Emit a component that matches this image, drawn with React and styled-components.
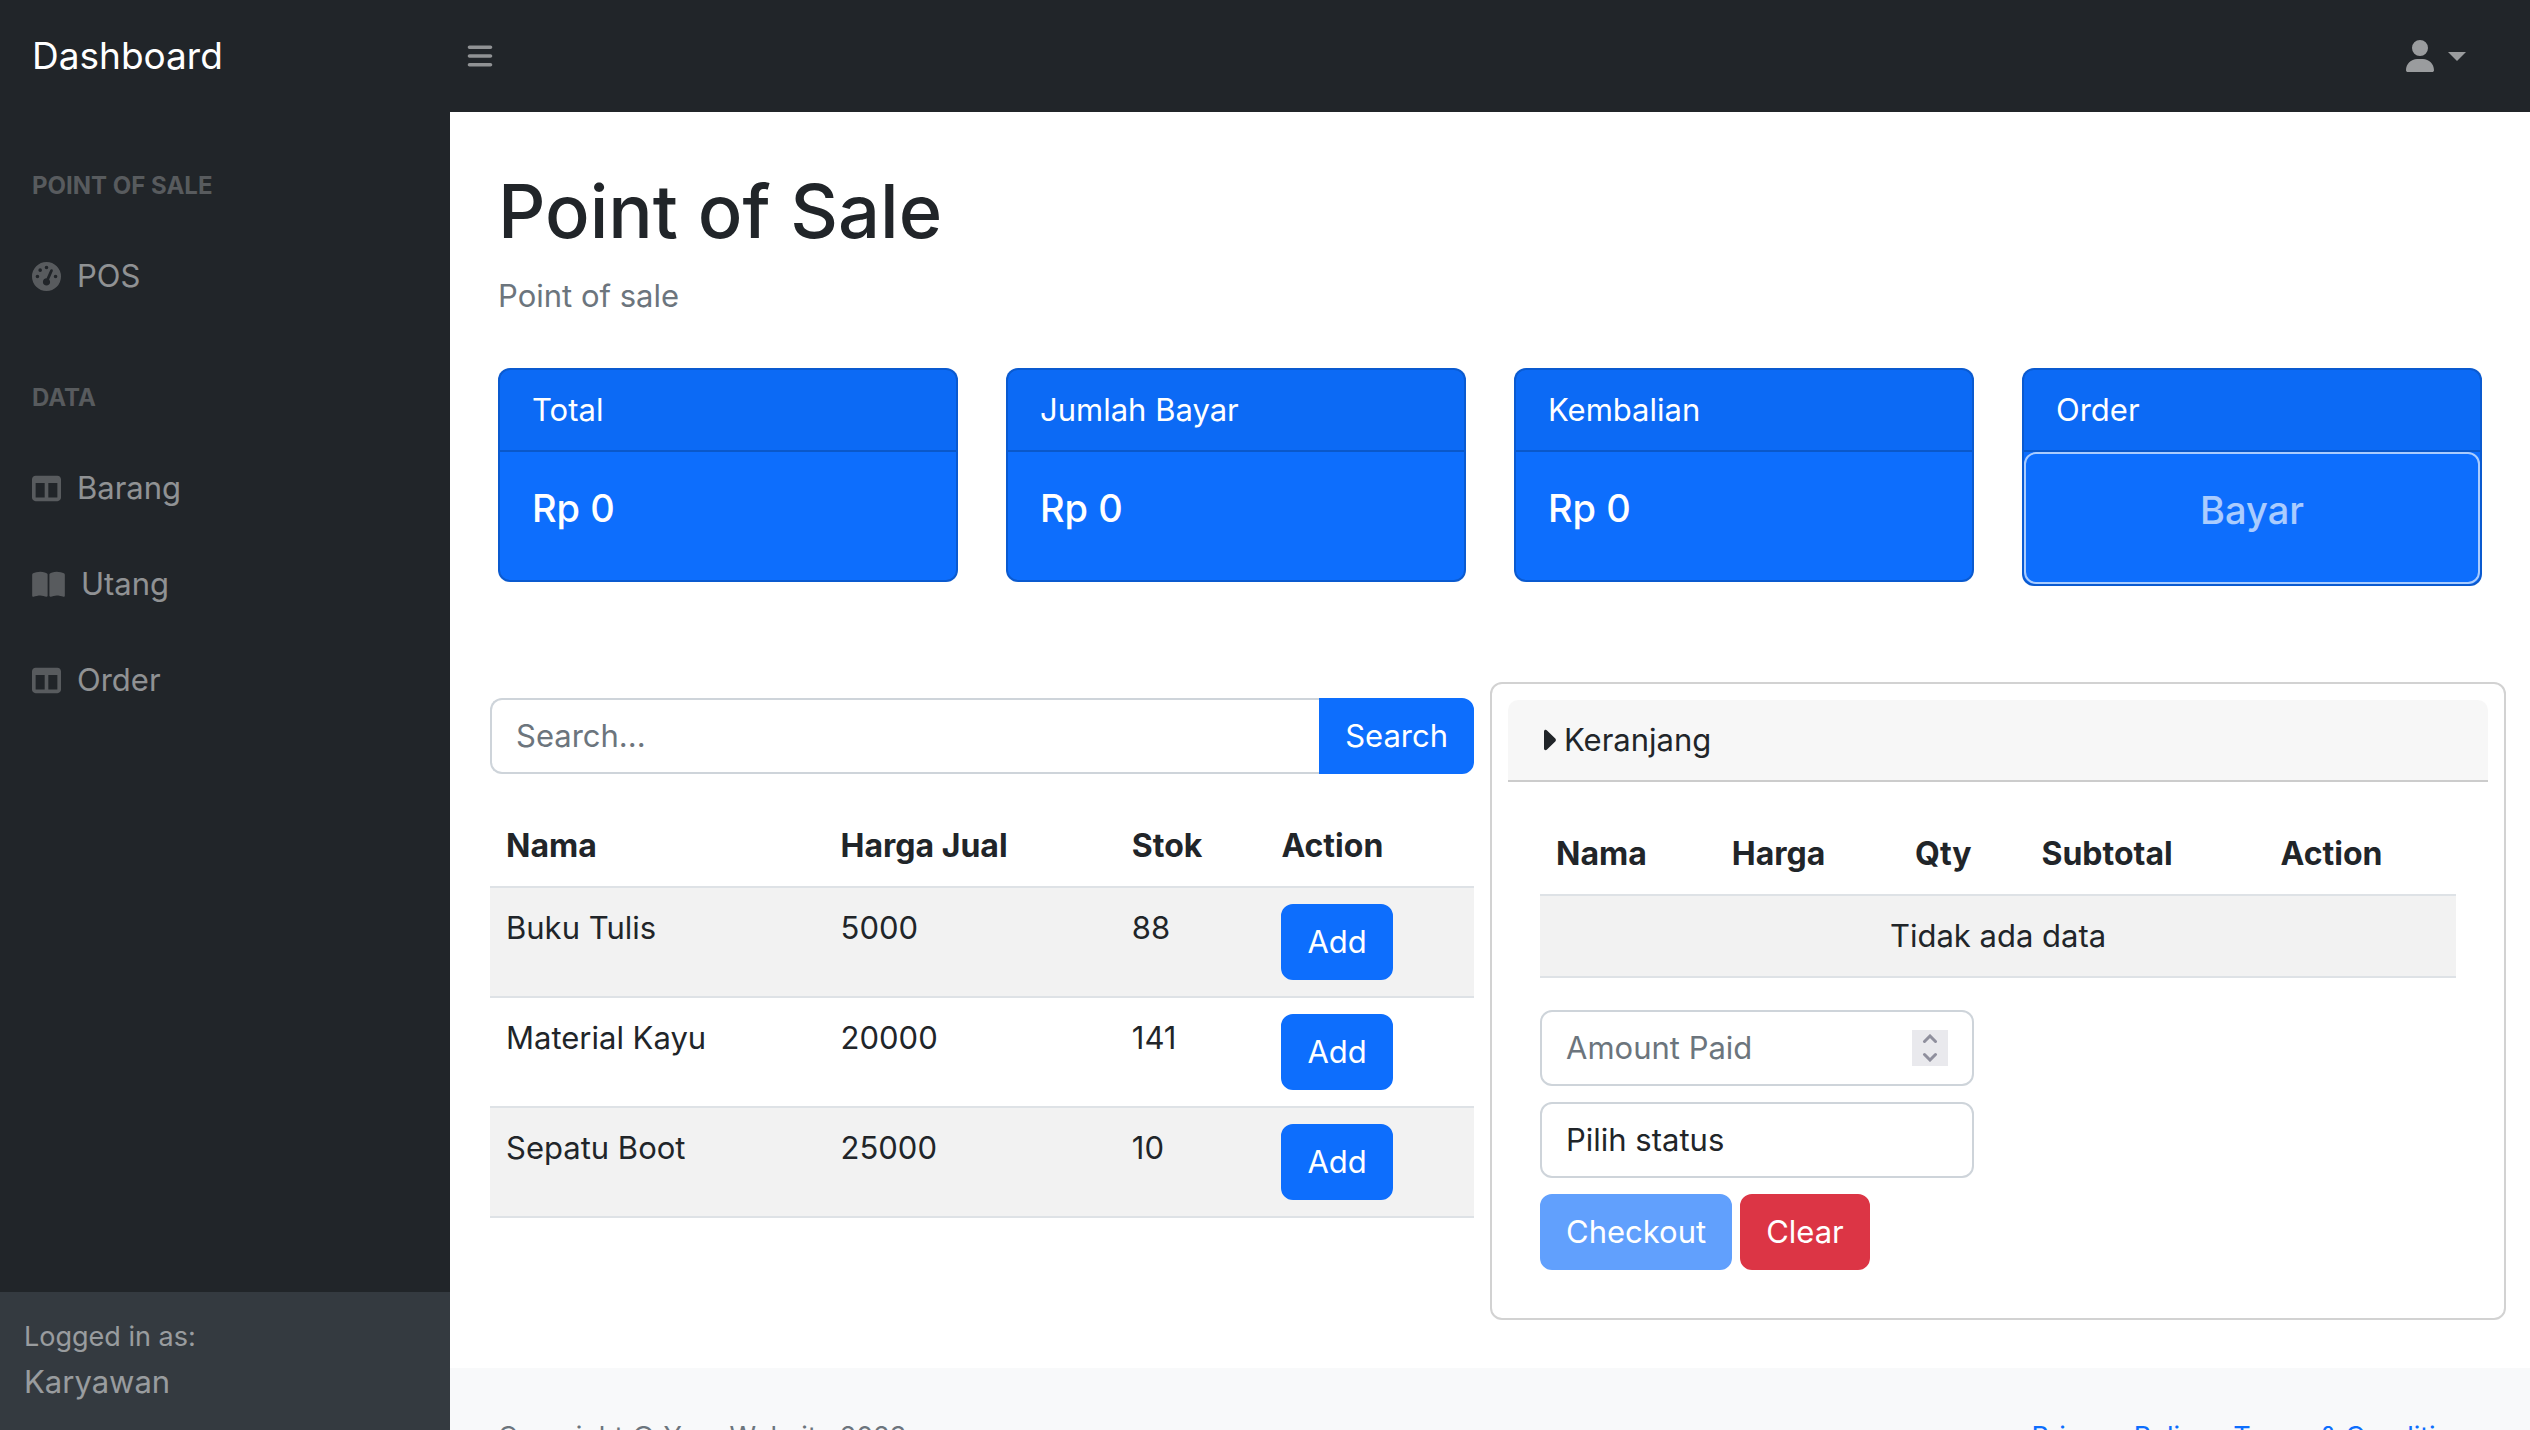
import React, { useState } from "react";
import styled, { createGlobalStyle } from "styled-components";
import {
  FaBars,
  FaBookOpen,
  FaGaugeHigh,
  FaTableColumns,
  FaUser,
} from "react-icons/fa6";

const GlobalStyle = createGlobalStyle`
  *, *::before, *::after { box-sizing: border-box; }
  body {
    margin: 0;
    background: #fff;
    color: #212529;
    font-family: Inter, "Liberation Sans", sans-serif;
    font-size: 31px;
    line-height: 48px;
  }
  button, input, select { font: inherit; color: inherit; margin: 0; }
  h1, h2, p { margin: 0; }
  a { text-decoration: none; }
`;

const Shell = styled.div`
  display: grid;
  grid-template: 112px minmax(0, 1fr) / 450px minmax(0, 1fr);
  height: 100vh;
`;

const TopBar = styled.header`
  grid-column: 1 / -1;
  display: flex;
  align-items: center;
  background: #212529;
`;

const Brand = styled.a`
  width: 450px;
  padding-left: 32px;
  color: #fff;
  font-size: 37px;
`;

const MenuToggle = styled.button`
  display: flex;
  padding: 16px;
  border: 0;
  background: none;
  color: rgba(255, 255, 255, 0.5);
  font-size: 28px;
`;

const UserMenu = styled.button`
  display: flex;
  align-items: center;
  gap: 14px;
  margin-left: auto;
  padding: 16px 64px 16px 16px;
  border: 0;
  background: none;
  color: rgba(255, 255, 255, 0.55);
  font-size: 32px;

  &::after {
    content: "";
    border: solid transparent;
    border-width: 9px 9px 0;
    border-top-color: currentColor;
  }
  svg { width: 28px; }
`;

const Sidebar = styled.aside`
  display: flex;
  flex-direction: column;
  background: #212529;
  color: rgba(255, 255, 255, 0.5);
`;

const SideNav = styled.nav`
  flex: 1;
`;

const SideHeading = styled.h2`
  padding: 56px 32px 24px;
  color: rgba(255, 255, 255, 0.25);
  font-size: 24px;
  font-weight: 700;
  line-height: 36px;
  text-transform: uppercase;
`;

const SideLink = styled.a`
  display: flex;
  align-items: center;
  gap: 16px;
  padding: 24px 32px;
  color: rgba(255, 255, 255, 0.5);

  svg {
    width: ${(p) => (p.$wide ? "33px" : "29px")};
    height: 29px;
    color: rgba(255, 255, 255, 0.25);
  }
`;

const SideFooter = styled.div`
  padding: 24px;
  background: #343a40;
`;

const Small = styled.div`
  font-size: 27px;
  line-height: 42px;
`;

const Content = styled.div`
  overflow-y: auto;
  scrollbar-width: none;
`;

const Main = styled.main`
  padding: 48px 24px;
`;

const Intro = styled.div`
  padding: 0 24px;
`;

const Title = styled.h1`
  margin-bottom: 10px;
  font-size: 74px;
  font-weight: 500;
  line-height: 102px;
`;

const Breadcrumb = styled.p`
  margin-bottom: 48px;
  color: #6c757d;
`;

const CardRow = styled.div`
  display: grid;
  grid-template-columns: repeat(4, minmax(0, 1fr));
  align-items: start;
  gap: 48px;
  margin-bottom: 96px;
`;

const StatCard = styled.section`
  border: 2px solid rgba(0, 0, 0, 0.175);
  border-radius: 12px;
  background: #0d6efd;
  color: #fff;
`;

const CardHeader = styled.div`
  padding: 16px 32px;
  border-bottom: 2px solid rgba(0, 0, 0, 0.175);
  border-radius: 10px 10px 0 0;
  background: rgba(0, 0, 0, 0.03);
`;

const StatValue = styled.p`
  padding: 32px 32px 48px;
  font-size: 38px;
  font-weight: 500;
`;

const PayButton = styled.button`
  display: block;
  width: 100%;
  padding: 32px 32px 48px;
  border: 2px solid #fff;
  border-radius: 12px;
  background: none;
  color: #fff;
  font-size: 38px;
  font-weight: 500;
  opacity: 0.65;
`;

const Columns = styled.div`
  display: grid;
  grid-template-columns: repeat(2, minmax(0, 1fr));
`;

const Products = styled.section`
  padding: 16px;
`;

const Button = styled.button`
  padding: 12px 24px;
  border: 2px solid ${(p) => p.$color || "#0d6efd"};
  border-radius: 12px;
  background: ${(p) => p.$color || "#0d6efd"};
  color: #fff;
  vertical-align: top;

  &:disabled { opacity: 0.65; }
`;

const SearchForm = styled.form`
  display: flex;
  margin-bottom: 32px;

  ${Button} { border-radius: 0 12px 12px 0; }
`;

const SearchInput = styled.input`
  flex: 1;
  min-width: 0;
  padding: 12px 24px;
  border: 2px solid #ced4da;
  border-right: 0;
  border-radius: 12px 0 0 12px;
  background: #fff;
  outline: 0;

  &::placeholder { color: #6c757d; opacity: 1; }
`;

const Table = styled.table`
  width: 100%;
  border-collapse: separate;
  border-spacing: 0;
  table-layout: fixed;

  th, td {
    padding: 16px;
    border-bottom: 2px solid #dee2e6;
    text-align: left;
    vertical-align: top;
  }
  th { font-size: 32px; font-weight: 700; }
  tbody tr:nth-child(odd) td { background: #f2f2f2; }
`;

const Col = styled.col`
  width: ${(p) => p.$w}%;
`;

const EmptyCell = styled.td`
  && { text-align: center; }
`;

const Cart = styled.section`
  padding: 16px;
  border: 2px solid #d2d2d2;
  border-radius: 12px;
`;

const CartHeader = styled(CardHeader)`
  display: flex;
  align-items: center;
  gap: 8px;
  padding-left: 36px;

  svg { width: 12px; height: 22px; }
`;

const CartBody = styled.div`
  padding: 32px;
`;

const CartForm = styled.form`
  display: grid;
  grid-template-columns: minmax(0, 1fr);
  gap: 16px;
  width: calc(50% - 24px);
  margin-top: 32px;
`;

const Field = styled.div`
  display: flex;
  align-items: center;
  padding: 12px 24px;
  border: 2px solid #ced4da;
  border-radius: 12px;
  background: #fff;
`;

const FieldInput = styled.input`
  flex: 1;
  min-width: 0;
  height: 48px;
  padding: 0;
  border: 0;
  outline: 0;
  background: none;
  appearance: textfield;

  &::placeholder { color: #6c757d; opacity: 1; }
  &::-webkit-inner-spin-button { appearance: none; }
`;

const Stepper = styled.div`
  display: grid;
  grid-template-rows: 18px 18px;
  width: 36px;
  background: #e9e9ed;
`;

const Step = styled.button`
  display: flex;
  align-items: center;
  justify-content: center;
  padding: 0;
  border: 0;
  background: none;
  color: #8f8f9d;

  svg { width: 16px; height: 10px; }
`;

const StatusSelect = styled.select`
  width: 100%;
  height: 76px;
  padding: 12px 24px;
  border: 2px solid #ced4da;
  border-radius: 12px;
  background: #fff;
  appearance: none;
`;

const Actions = styled.div`
  display: flex;
  gap: 8px;
`;

const Footer = styled.footer`
  display: flex;
  justify-content: space-between;
  padding: 48px;
  background: #f8f9fa;
  color: #6c757d;
  font-size: 27px;
  line-height: 42px;

  a { color: #0d6efd; }
`;

const stats = ["Total", "Jumlah Bayar", "Kembalian"];

const products = [
  { name: "Buku Tulis", price: 5000, stock: 88 },
  { name: "Material Kayu", price: 20000, stock: 141 },
  { name: "Sepatu Boot", price: 25000, stock: 10 },
];

const dataLinks = [
  { label: "Barang", Icon: FaTableColumns },
  { label: "Utang", Icon: FaBookOpen, wide: true },
  { label: "Order", Icon: FaTableColumns },
];

const Chevron = ({ d }) => (
  <svg viewBox="0 0 16 10" fill="none" stroke="currentColor" strokeWidth="3" strokeLinecap="round" aria-hidden="true">
    <path d={d} />
  </svg>
);

export default function App() {
  const [amount, setAmount] = useState("");
  const step = (by) => setAmount(String(Number(amount) + by));

  return (
    <>
      <GlobalStyle />
      <Shell>
        <TopBar>
          <Brand href="#">Dashboard</Brand>
          <MenuToggle type="button" aria-label="Toggle sidebar"><FaBars /></MenuToggle>
          <UserMenu type="button" aria-label="User menu"><FaUser /></UserMenu>
        </TopBar>

        <Sidebar>
          <SideNav>
            <SideHeading>Point of Sale</SideHeading>
            <SideLink href="#"><FaGaugeHigh />POS</SideLink>
            <SideHeading>Data</SideHeading>
            {dataLinks.map(({ label, Icon, wide }) => (
              <SideLink href="#" key={label} $wide={wide}><Icon />{label}</SideLink>
            ))}
          </SideNav>
          <SideFooter>
            <Small>Logged in as:</Small>
            Karyawan
          </SideFooter>
        </Sidebar>

        <Content>
          <Main>
            <Intro>
              <Title>Point of Sale</Title>
              <Breadcrumb>Point of sale</Breadcrumb>
              <CardRow>
                {stats.map((label) => (
                  <StatCard key={label}>
                    <CardHeader>{label}</CardHeader>
                    <StatValue>Rp 0</StatValue>
                  </StatCard>
                ))}
                <StatCard>
                  <CardHeader>Order</CardHeader>
                  <PayButton type="button" disabled>Bayar</PayButton>
                </StatCard>
              </CardRow>
            </Intro>

            <Columns>
              <Products>
                <SearchForm onSubmit={(e) => e.preventDefault()}>
                  <SearchInput type="text" placeholder="Search..." aria-label="Search" />
                  <Button type="submit">Search</Button>
                </SearchForm>
                <Table>
                  <colgroup>
                    <Col $w={34} /><Col $w={29.6} /><Col $w={15.2} /><Col $w={21.2} />
                  </colgroup>
                  <thead>
                    <tr><th>Nama</th><th>Harga Jual</th><th>Stok</th><th>Action</th></tr>
                  </thead>
                  <tbody>
                    {products.map((p) => (
                      <tr key={p.name}>
                        <td>{p.name}</td>
                        <td>{p.price}</td>
                        <td>{p.stock}</td>
                        <td><Button type="button">Add</Button></td>
                      </tr>
                    ))}
                  </tbody>
                </Table>
              </Products>

              <Cart>
                <CartHeader>
                  <svg viewBox="0 0 12 22" fill="currentColor" aria-hidden="true">
                    <path d="M0 2.500C0 .8 1.800 .2 3 1.400l8.300 8.200c.8.8.8 2 0 2.800L3 20.600c-1.200 1.200-3 .6-3-1.100z" />
                  </svg>
                  Keranjang
                </CartHeader>
                <CartBody>
                  <Table>
                    <colgroup>
                      <Col $w={19.2} /><Col $w={20} /><Col $w={13.8} /><Col $w={26.1} /><Col $w={20.9} />
                    </colgroup>
                    <thead>
                      <tr><th>Nama</th><th>Harga</th><th>Qty</th><th>Subtotal</th><th>Action</th></tr>
                    </thead>
                    <tbody>
                      <tr><EmptyCell colSpan={5}>Tidak ada data</EmptyCell></tr>
                    </tbody>
                  </Table>
                  <CartForm onSubmit={(e) => e.preventDefault()}>
                    <Field>
                      <FieldInput
                        type="number"
                        placeholder="Amount Paid"
                        aria-label="Amount Paid"
                        value={amount}
                        onChange={(e) => setAmount(e.target.value)}
                      />
                      <Stepper>
                        <Step type="button" aria-label="Increase" onClick={() => step(1)}><Chevron d="M2.500 7.500 8 2l5.500 5.500" /></Step>
                        <Step type="button" aria-label="Decrease" onClick={() => step(-1)}><Chevron d="M2.500 2.500 8 8l5.500-5.500" /></Step>
                      </Stepper>
                    </Field>
                    <StatusSelect aria-label="Status" defaultValue="">
                      <option value="">Pilih status</option>
                    </StatusSelect>
                    <Actions>
                      <Button type="submit" disabled>Checkout</Button>
                      <Button type="button" $color="#dc3545">Clear</Button>
                    </Actions>
                  </CartForm>
                </CartBody>
              </Cart>
            </Columns>
          </Main>
          <Footer>
            <div>Copyright © Your Website 2023</div>
            <div><a href="#">Privacy Policy</a> · <a href="#">Terms &amp; Conditions</a></div>
          </Footer>
        </Content>
      </Shell>
    </>
  );
}
